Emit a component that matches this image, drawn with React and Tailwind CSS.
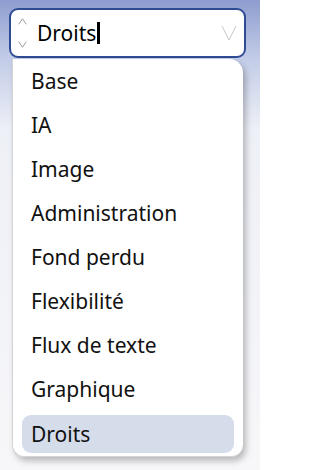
import React from "react";

const items = ["Base","IA","Image","Administration","Fond perdu","Flexibilité","Flux de texte","Graphique","Droits"];

export default function App() {
  return (
    <div className="w-[260px] h-[470px] overflow-hidden bg-[linear-gradient(to_bottom,#8e9dcf_0px,#c4cde8_60px,#eef0f7_130px,#f7f7f9_470px)] pt-2 px-[9px]" style={{fontFamily: "'Noto Sans', sans-serif"}}>
      <div className="h-[50px] w-[237px] rounded-[9px] border-2 border-[#2f4c93] bg-white flex items-center pl-[7px] pr-[7px]">
        <div className="flex flex-col justify-between h-[30px] w-[10px]">
          <svg width="9" height="7" viewBox="0 0 9 7"><path d="M0.7 6.3 L4.5 0.8 L8.3 6.3" fill="none" stroke="#9b9b9b" strokeWidth="1"/></svg>
          <svg width="9" height="7" viewBox="0 0 9 7"><path d="M0.7 0.7 L4.5 6.2 L8.3 0.7" fill="none" stroke="#9b9b9b" strokeWidth="1"/></svg>
        </div>
        <div className="ml-[9px] flex items-center flex-1">
          <span className="text-[21px] text-black leading-none">Droits</span>
          <span className="ml-[1px] w-[3px] h-[22px] bg-black"></span>
        </div>
        <svg width="16" height="16" viewBox="0 0 16 16"><path d="M1 1 L8 15 L15 1" fill="none" stroke="#c8c8c8" strokeWidth="1"/></svg>
      </div>
      <div className="ml-[3px] mt-[2px] w-[231px] h-[398px] bg-white rounded-b-[12px] rounded-tr-[14px] border-l border-b border-[#d4d4d4] shadow-[3px_4px_6px_rgba(0,0,0,0.25)] px-[9px]">
        <div className="-mt-[1px]">
          {items.map((t) => (
            <div key={t} className={`flex items-center px-[9px] rounded-[9px] text-[21px] leading-none text-[#111] ${t === "Droits" ? "bg-[#d5dcea] mt-[4px] h-[38px]" : "h-[44px]"}`}>
              {t}
            </div>
          ))}
        </div>
      </div>
    </div>
  );
}
